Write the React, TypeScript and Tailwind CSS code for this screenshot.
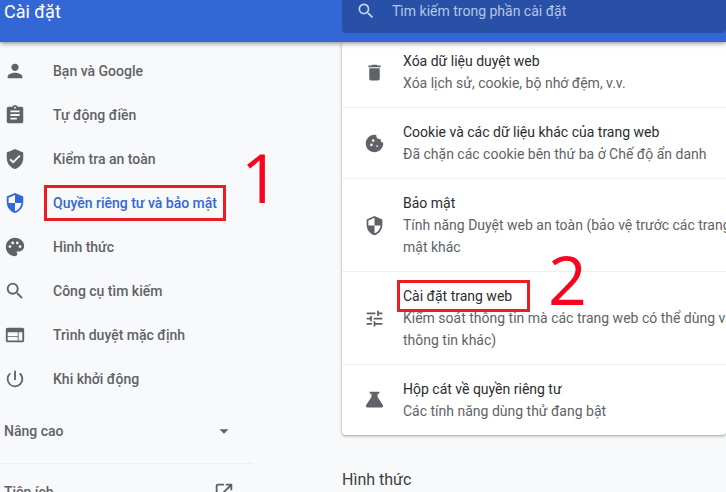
import type { ReactNode } from 'react';
import type { IconType } from 'react-icons';
import {
  MdArrowDropDown,
  MdAssignment,
  MdCookie,
  MdDelete,
  MdOpenInNew,
  MdPalette,
  MdPerson,
  MdPowerSettingsNew,
  MdSearch,
  MdTune,
  MdVerifiedUser,
  MdWeb,
} from 'react-icons/md';

const ShieldIcon: IconType = ({ size = 20, className }) => (
  <svg viewBox="0 0 24 24" width={size} height={size} fill="currentColor" className={className} aria-hidden="true">
    <path d="M12 1L3 5v6c0 5.55 3.84 10.74 9 12 5.16-1.26 9-6.45 9-12V5l-9-4zm0 10.99h7c-.53 4.12-3.28 7.79-7 8.94V12H5V6.3l7-3.11v8.8z" />
  </svg>
);

const FlaskIcon: IconType = ({ size = 20, className }) => (
  <svg viewBox="0 0 24 24" width={size} height={size} fill="currentColor" className={className} aria-hidden="true">
    <path d="M6.5 2h11v2.2h-2V8l6 9.2c.9 1.3 0 2.8-1.5 2.8H4c-1.5 0-2.4-1.5-1.5-2.8l6-9.2V4.2h-2z" />
  </svg>
);

const navItems: { label: string; icon: IconType; active?: boolean }[] = [
  { label: 'Bạn và Google', icon: MdPerson },
  { label: 'Tự động điền', icon: MdAssignment },
  { label: 'Kiểm tra an toàn', icon: MdVerifiedUser },
  { label: 'Quyền riêng tư và bảo mật', icon: ShieldIcon, active: true },
  { label: 'Hình thức', icon: MdPalette },
  { label: 'Công cụ tìm kiếm', icon: MdSearch },
  { label: 'Trình duyệt mặc định', icon: MdWeb },
  { label: 'Khi khởi động', icon: MdPowerSettingsNew },
];

const privacyRows: { title: string; lines: string[]; icon: IconType; marked?: boolean }[] = [
  { title: 'Xóa dữ liệu duyệt web', lines: ['Xóa lịch sử, cookie, bộ nhớ đệm, v.v.'], icon: MdDelete },
  {
    title: 'Cookie và các dữ liệu khác của trang web',
    lines: ['Đã chặn các cookie bên thứ ba ở Chế độ ẩn danh'],
    icon: MdCookie,
  },
  {
    title: 'Bảo mật',
    lines: ['Tính năng Duyệt web an toàn (bảo vệ trước các trang', 'mật khác'],
    icon: ShieldIcon,
  },
  {
    title: 'Cài đặt trang web',
    lines: ['Kiểm soát thông tin mà các trang web có thể dùng và', 'thông tin khác)'],
    icon: MdTune,
    marked: true,
  },
  { title: 'Hộp cát về quyền riêng tư', lines: ['Các tính năng dùng thử đang bật'], icon: FlaskIcon },
];

const StepNumber = ({ className, children }: { className: string; children: ReactNode }) => (
  <span
    className={`absolute font-['Open_Sans',sans-serif] text-[68px] leading-[68px] font-medium text-[#fb0320] ${className}`}
  >
    {children}
  </span>
);

const Header = () => (
  <header className="relative z-10 flex h-[42px] shrink-0 bg-[#3367d6] shadow-[0_1px_5px_rgba(0,0,0,0.5)]">
    <h1 className="w-[342px] shrink-0 pl-1 text-lg leading-6 text-white">Cài đặt</h1>
    <label className="flex h-[33px] flex-1 items-start gap-4 rounded-b-sm bg-[#2850a7] pl-3.5">
      <MdSearch size={20} className="mt-px shrink-0 text-[#c9d3e9]" aria-hidden="true" />
      <input
        type="search"
        aria-label="Tìm kiếm trong phần cài đặt"
        placeholder="Tìm kiếm trong phần cài đặt"
        className="min-w-0 flex-1 bg-transparent text-sm leading-[22px] text-white outline-none placeholder:text-[#b7c5e3]"
      />
    </label>
  </header>
);

const Sidebar = () => (
  <aside className="w-[342px] shrink-0 pt-[7px] font-medium text-[#5f6368]">
    <nav>
      <ul>
        {navItems.map(({ label, icon: Icon, active }) => (
          <li key={label}>
            <a href="#" className={`flex h-11 items-center gap-[27px] pl-1 ${active ? 'text-[#3367d6]' : ''}`}>
              <Icon size={22} aria-hidden="true" />
              <span className="relative">
                {label}
                {active && (
                  <>
                    <span className="absolute -inset-x-[9px] -inset-y-[7px] border-3 border-[#ed1c24]" />
                    <StepNumber className="-top-[49px] left-[188px]">1</StepNumber>
                  </>
                )}
              </span>
            </a>
          </li>
        ))}
      </ul>
      <button type="button" className="flex h-[59px] w-[253px] items-center justify-between pr-[18px] pl-1">
        Nâng cao
        <MdArrowDropDown size={22} aria-hidden="true" />
      </button>
      <a
        href="#"
        className="mt-[3px] flex h-14 w-[253px] items-center justify-between border-t border-[#eceef0] pr-[18px] pl-1"
      >
        Tiện ích
        <MdOpenInNew size={22} aria-hidden="true" />
      </a>
    </nav>
  </aside>
);

const App = () => {
  return (
    <div className="flex h-screen flex-col overflow-hidden bg-[#f8f9fa] font-[Roboto,sans-serif] text-sm leading-[22px]">
      <Header />
      <div className="flex flex-1">
        <Sidebar />
        <main className="min-w-0 flex-1">
          <section className="rounded-b bg-white shadow-[0_1px_3px_rgba(60,64,67,0.5)]">
            {privacyRows.map(({ title, lines, icon: Icon, marked }) => (
              <a
                key={title}
                href="#"
                className="flex items-center gap-[18px] border-t border-[#f0f0f1] py-[13px] pl-[22px] first:border-t-0 first:pt-2"
              >
                <Icon size={21} className="shrink-0 text-[#5f6368]" aria-hidden="true" />
                <div className="whitespace-nowrap">
                  <span className="relative text-[#2b2d30]">
                    {title}
                    {marked && (
                      <>
                        <span className="absolute -inset-x-1.5 -inset-y-2 -right-[18px] border-3 border-[#ed1c24]" />
                        <StepNumber className="-top-[43px] left-[145px]">2</StepNumber>
                      </>
                    )}
                  </span>
                  {lines.map(line => (
                    <p key={line} className="text-[#5f6368]">{line}</p>
                  ))}
                </div>
              </a>
            ))}
          </section>
          <h2 className="mt-[34px] text-base leading-[22px] text-[#3c4043]">Hình thức</h2>
        </main>
      </div>
    </div>
  );
};

export default App;
